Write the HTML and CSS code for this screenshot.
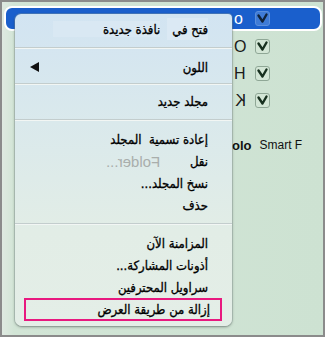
FILE: index.html
```html
<!DOCTYPE html>
<html lang="ar">
<head>
<meta charset="utf-8">
<link rel="stylesheet" href="styles.css">
</head>
<body>
<div class="frame">
  <div class="list">
    <div class="row selected"><span class="letter">o</span><span class="check"><svg viewBox="0 0 15 15" width="15" height="15"><path d="M3.5 4.5 L7.5 10.5 L11.5 3.5" fill="none" stroke="#10233a" stroke-width="2.4" stroke-linecap="round" stroke-linejoin="round"/></svg></span></div>
    <div class="row"><span class="letter">O</span><span class="check"><svg viewBox="0 0 15 15" width="15" height="15"><path d="M3.5 4.5 L7.5 10.5 L11.5 3.5" fill="none" stroke="#17301f" stroke-width="2.4" stroke-linecap="round" stroke-linejoin="round"/></svg></span></div>
    <div class="row"><span class="letter">H</span><span class="check"><svg viewBox="0 0 15 15" width="15" height="15"><path d="M3.5 4.5 L7.5 10.5 L11.5 3.5" fill="none" stroke="#17301f" stroke-width="2.4" stroke-linecap="round" stroke-linejoin="round"/></svg></span></div>
    <div class="row"><span class="letter mirror">K</span><span class="check"><svg viewBox="0 0 15 15" width="15" height="15"><path d="M3.5 4.5 L7.5 10.5 L11.5 3.5" fill="none" stroke="#17301f" stroke-width="2.4" stroke-linecap="round" stroke-linejoin="round"/></svg></span></div>
    <div class="smart"><b>olo</b><span>Smart F</span></div>
  </div>

  <div class="menu" dir="rtl">
    <div class="item first"><span class="hl hl-a">فتح في</span><span class="hl hl-b">نافذة جديدة</span></div>
    <div class="sep"></div>
    <div class="item sub"><span>اللون</span><span class="arrow"></span></div>
    <div class="sep tight"></div>
    <div class="item">مجلد جديد</div>
    <div class="sep"></div>
    <div class="item">إعادة تسمية &nbsp;المجلد</div>
    <div class="item"><span>نقل</span><span class="ghost">Folder...</span></div>
    <div class="item">نسخ المجلد...</div>
    <div class="item">حذف</div>
    <div class="sep"></div>
    <div class="item">المزامنة الآن</div>
    <div class="item">أذونات المشاركة...</div>
    <div class="item">سراويل المحترفين</div>
    <div class="item boxed">إزالة من طريقة العرض</div>
  </div>
</div>
</body>
</html>
```

FILE: styles.css
```css
html, body {
  margin: 0;
  padding: 0;
}
body {
  width: 325px;
  height: 337px;
  overflow: hidden;
  font-family: "Liberation Sans", Arial, sans-serif;
}
.frame {
  position: relative;
  box-sizing: border-box;
  width: 325px;
  height: 337px;
  border: 2px solid #8b8b8b;
  background: linear-gradient(to right, #dfe9e1 0px, #d2e5d6 12px, #cde2d2 100%);
}
.list {
  display: flex;
  flex-direction: column;
  padding-top: 4px;
}
.row {
  height: 27px;
  display: flex;
  align-items: center;
  justify-content: flex-end;
  gap: 9px;
  padding-right: 53px;
  box-sizing: border-box;
  font-size: 16px;
  color: #1a1a1a;
}
.row.selected {
  margin-left: 2px;
  margin-right: 1px;
  height: 25px;
  margin-bottom: 2px;
  border: 2px solid #ffffff;
  border-radius: 8px;
  background: #1a5fcc;
  color: #fff;
  padding-right: 50px;
}
.letter {
  width: 12px;
  text-align: left;
}
.mirror {
  display: inline-block;
  transform: scaleX(-1);
}
.check {
  width: 15px;
  height: 15px;
  box-sizing: border-box;
  border: 1px solid #8fa796;
  border-radius: 3px;
  background: #d3e6d6;
  display: flex;
  align-items: center;
  justify-content: center;
}
.check svg {
  display: block;
  margin: -1px;
}
.selected .check {
  background: #3f7bd6;
  border-color: #5b8fdc;
}
.smart {
  margin-top: 24px;
  display: flex;
  gap: 8px;
  padding-left: 230px;
  font-size: 12px;
  color: #111;
}
.smart b {
  font-size: 13px;
}

.menu {
  position: absolute;
  left: 13px;
  top: 12px;
  width: 217px;
  height: 312px;
  box-sizing: border-box;
  padding-top: 4px;
  border-radius: 6px 4px 7px 7px;
  background: linear-gradient(to bottom, #d2e4f2 0%, #dae9ec 35%, #e2ede6 70%, #e4eee7 100%);
  box-shadow: 0 1px 3px rgba(0, 0, 0, 0.35), 0 0 0 1px rgba(150, 170, 165, 0.35);
  display: flex;
  flex-direction: column;
  font-family: "DejaVu Sans Condensed", "DejaVu Sans", sans-serif;
  font-size: 13px;
  font-weight: normal;
  color: #000;
  -webkit-text-stroke: 0.3px #000;
}
.item {
  height: 22px;
  display: flex;
  align-items: center;
  padding-right: 24px;
  padding-left: 14px;
  white-space: nowrap;
}
.item.first {
  gap: 7px;
}
.hl {
  display: flex;
  align-items: center;
  height: 22px;
}
.hl-a {
  background: #dbe9f4;
  padding-left: 5px;
}
.hl-b {
  background: #d9e8f3;
  height: 16px;
  padding-left: 50px;
}
.sub {
  justify-content: space-between;
  padding-left: 15px;
}
.arrow {
  width: 0;
  height: 0;
  border-top: 5px solid transparent;
  border-bottom: 5px solid transparent;
  border-right: 9px solid #111;
}
.ghost {
  display: inline-block;
  direction: ltr;
  unicode-bidi: isolate;
  transform: scaleX(-1);
  margin-right: 30px;
  font-family: "Liberation Sans", Arial, sans-serif;
  font-weight: normal;
  font-size: 15px;
  color: #a9aeac;
  -webkit-text-stroke: 0;
}
.sep {
  height: 16px;
  display: flex;
  align-items: center;
}
.sep::before {
  content: "";
  display: block;
  width: 100%;
  height: 1px;
  background: #c3cdcd;
  border-bottom: 1px solid #f2f6f4;
}
.sep.tight {
  height: 12px;
}
.boxed {
  margin: 0 10px 0 9px;
  height: 23px;
  border: 2px solid #e8197f;
  box-sizing: border-box;
  padding-right: 10px;
}
```
